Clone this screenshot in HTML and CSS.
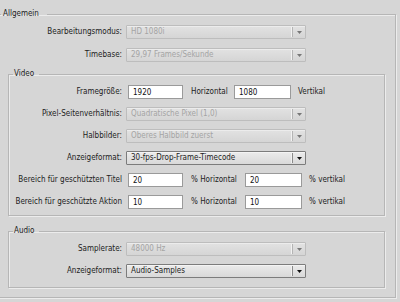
FILE: index.html
```html
<!DOCTYPE html>
<html>

<head>
    <title>Sequenzeinstellungen</title>
    <link rel="stylesheet" href="styles.css">
</head>

<body>
    <fieldset class="group group-main">
        <legend>Allgemein</legend>

        <div class="row">
            <label class="lbl">Bearbeitungsmodus:</label>
            <div class="combo disabled">
                <span class="combo-text">HD 1080i</span>
                <span class="combo-btn"><svg width="5" height="3" viewBox="0 0 5 3"><path d="M0 0h5L2.5 3z" /></svg></span>
            </div>
        </div>
        <div class="row">
            <label class="lbl">Timebase:</label>
            <div class="combo disabled">
                <span class="combo-text">29,97 Frames/Sekunde</span>
                <span class="combo-btn"><svg width="5" height="3" viewBox="0 0 5 3"><path d="M0 0h5L2.5 3z" /></svg></span>
            </div>
        </div>

        <fieldset class="group group-sub">
            <legend>Video</legend>
            <div class="row">
                <label class="lbl">Framegröße:</label>
                <input class="field field-a" type="text" value="1920">
                <span class="unit unit-a">Horizontal</span>
                <input class="field field-b" type="text" value="1080">
                <span class="unit unit-end">Vertikal</span>
            </div>
            <div class="row">
                <label class="lbl">Pixel-Seitenverhältnis:</label>
                <div class="combo disabled">
                    <span class="combo-text">Quadratische Pixel (1,0)</span>
                    <span class="combo-btn"><svg width="5" height="3" viewBox="0 0 5 3"><path d="M0 0h5L2.5 3z" /></svg></span>
                </div>
            </div>
            <div class="row">
                <label class="lbl">Halbbilder:</label>
                <div class="combo disabled">
                    <span class="combo-text">Oberes Halbbild zuerst</span>
                    <span class="combo-btn"><svg width="5" height="3" viewBox="0 0 5 3"><path d="M0 0h5L2.5 3z" /></svg></span>
                </div>
            </div>
            <div class="row">
                <label class="lbl">Anzeigeformat:</label>
                <div class="combo">
                    <span class="combo-text">30-fps-Drop-Frame-Timecode</span>
                    <span class="combo-btn"><svg width="5" height="3" viewBox="0 0 5 3"><path d="M0 0h5L2.5 3z" /></svg></span>
                </div>
            </div>
            <div class="row">
                <label class="lbl">Bereich für geschützten Titel</label>
                <input class="field field-a" type="text" value="20">
                <span class="unit unit-b">% Horizontal</span>
                <input class="field field-b" type="text" value="20">
                <span class="unit unit-end">% vertikal</span>
            </div>
            <div class="row">
                <label class="lbl">Bereich für geschützte Aktion</label>
                <input class="field field-a" type="text" value="10">
                <span class="unit unit-b">% Horizontal</span>
                <input class="field field-b" type="text" value="10">
                <span class="unit unit-end">% vertikal</span>
            </div>
        </fieldset>

        <fieldset class="group group-sub group-audio">
            <legend>Audio</legend>
            <div class="row">
                <label class="lbl">Samplerate:</label>
                <div class="combo disabled">
                    <span class="combo-text">48000 Hz</span>
                    <span class="combo-btn"><svg width="5" height="3" viewBox="0 0 5 3"><path d="M0 0h5L2.5 3z" /></svg></span>
                </div>
            </div>
            <div class="row">
                <label class="lbl">Anzeigeformat:</label>
                <div class="combo">
                    <span class="combo-text">Audio-Samples</span>
                    <span class="combo-btn"><svg width="5" height="3" viewBox="0 0 5 3"><path d="M0 0h5L2.5 3z" /></svg></span>
                </div>
            </div>
        </fieldset>
    </fieldset>
</body>

</html>
```

FILE: styles.css
```css
:root {
    --background: #d6d6d6;
    --etch-dark: #b6b6b6;
    --etch-light: #ececec;
    --text: #1c1c1c;
    --text-disabled: #a4a4a4;
}

* {
    margin: 0;
    padding: 0;
    box-sizing: border-box;
}

html,
body {
    width: 400px;
    height: 302px;
    overflow: hidden;
}

body {
    padding-top: 8px;
    background: var(--background);
    font-family: "DejaVu Sans Condensed", "DejaVu Sans", sans-serif;
    font-size: 8px;
    line-height: 12px;
    color: var(--text);
}

/* Etched group boxes */
.group {
    border: 1px solid var(--etch-dark);
    box-shadow: inset 1px 1px 0 var(--etch-light), 1px 1px 0 var(--etch-light);
    display: flex;
    flex-direction: column;
    gap: 8px;
}

.group legend {
    line-height: 12px;
    font-size: 8px;
    color: var(--text);
}

.group-main {
    margin-left: -6px;
    width: 402px;
    padding: 5px 10px 9px 13px;
    gap: 9px;
}

.group-main > legend {
    margin-left: -7px;
    padding: 0 8px 0 2px;
}

.group-sub {
    width: 377px;
    padding: 5px 4px 6px 4px;
    margin-top: -3px;
}

.group-sub > legend {
    padding: 0 5px 0 1px;
}

.group-audio {
    margin-top: 0;
    padding-bottom: 9px;
}

/* Rows */
.row {
    display: flex;
    align-items: center;
    height: 14px;
}

.lbl {
    width: 114px;
    margin-right: 4px;
    text-align: right;
    white-space: nowrap;
}

.group-sub .lbl {
    width: 109px;
}

/* Combo boxes */
.combo {
    width: 180px;
    height: 14px;
    display: flex;
    align-items: center;
    border: 1px solid #7c7c7c;
    border-radius: 1px;
    background: linear-gradient(#ebebeb, #d9d9d9);
    box-shadow: inset 0 1px 0 #f4f4f4;
}

.combo-text {
    flex: 1;
    padding-left: 4px;
    white-space: nowrap;
    overflow: hidden;
}

.combo-btn {
    width: 13px;
    height: 10px;
    display: flex;
    align-items: center;
    justify-content: center;
    border-left: 1px solid #8a8a8a;
    box-shadow: -1px 0 0 #f2f2f2;
}

.combo-btn svg {
    fill: #111;
    margin-left: 1px;
}

.combo.disabled {
    border-color: #bdbdbd;
    background: linear-gradient(#e2e2e2, #d5d5d5);
    box-shadow: inset 0 1px 0 #ececec;
}

.combo.disabled .combo-text {
    color: var(--text-disabled);
}

.combo.disabled .combo-btn {
    border-left-color: #b4b4b4;
}

.combo.disabled .combo-btn svg {
    fill: #777;
}

/* Text fields */
.field {
    height: 14px;
    margin-left: 2px;
    padding: 0 4px;
    border: 1px solid #9a9a9a;
    background: white;
    font-family: inherit;
    font-size: 8px;
    color: #111;
    outline: none;
}

.field-a {
    width: 55px;
}

.field-b {
    width: 57px;
    margin-left: 0;
}

.unit {
    white-space: nowrap;
    padding-left: 8px;
}

.unit-a {
    width: 51px;
}

.unit-b {
    width: 62px;
}

.unit-end {
    padding-left: 7px;
}
```
